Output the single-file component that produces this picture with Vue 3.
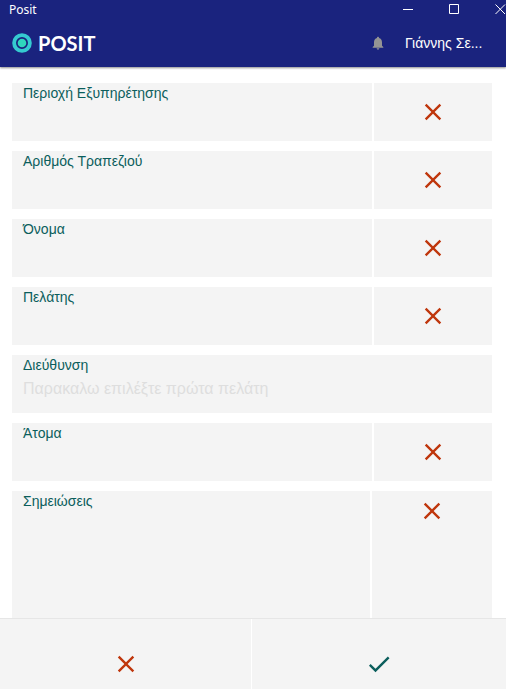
<script setup>
import { reactive } from 'vue'

const fields = reactive([
  { id: 'area', label: 'Περιοχή Εξυπηρέτησης', value: '', clearable: true },
  { id: 'table', label: 'Αριθμός Τραπεζιού', value: '', clearable: true },
  { id: 'name', label: 'Όνομα', value: '', clearable: true },
  { id: 'customer', label: 'Πελάτης', value: '', clearable: true },
  { id: 'address', label: 'Διεύθυνση', value: '', placeholder: 'Παρακαλω επιλέξτε πρώτα πελάτη', clearable: false },
  { id: 'people', label: 'Άτομα', value: '', clearable: true },
  { id: 'notes', label: 'Σημειώσεις', value: '', clearable: true, multiline: true }
])
</script>

<template>
  <div class="window">
    <header class="top">
      <div class="titlebar">
        <span class="title">Posit</span>
        <div class="controls">
          <button type="button" aria-label="Minimize">
            <svg width="11" height="11" viewBox="0 0 11 11"><path d="M0 5.5h10" /></svg>
          </button>
          <button type="button" aria-label="Maximize">
            <svg width="11" height="11" viewBox="0 0 11 11"><path d="M.5.5h9v9h-9z" /></svg>
          </button>
          <button type="button" aria-label="Close">
            <svg width="11" height="11" viewBox="0 0 11 11"><path d="M.5.5l9.500 9.500M10 .5L.5 10" /></svg>
          </button>
        </div>
      </div>
      <div class="appbar">
        <a class="brand" href="#">
          <svg width="20" height="20" viewBox="0 0 20 20">
            <circle cx="10" cy="10" r="7.900" fill="none" stroke="#35cad0" stroke-width="3.800" />
            <circle cx="10" cy="10" r="4.300" fill="#2fd6bd" />
          </svg>
          <span>POSIT</span>
        </a>
        <button type="button" class="bell" aria-label="Notifications">
          <svg width="16" height="16" viewBox="0 0 24 24">
            <path d="M12 22c1.100 0 2-.9 2-2h-4c0 1.100.89 2 2 2zm6-6v-5c0-3.070-1.640-5.640-4.500-6.320V4c0-.83-.67-1.500-1.500-1.500s-1.500.67-1.500 1.500v.68C7.630 5.360 6 7.920 6 11v5l-2 2v1h16v-1l-2-2z" />
          </svg>
        </button>
        <button type="button" class="user">Γιάννης Σε...</button>
      </div>
    </header>

    <form class="form" @submit.prevent>
      <div v-for="f in fields" :key="f.id" class="row" :class="{ notes: f.multiline }">
        <div class="field">
          <label :for="f.id">{{ f.label }}</label>
          <textarea v-if="f.multiline" :id="f.id" v-model="f.value"></textarea>
          <input v-else :id="f.id" v-model="f.value" type="text" :placeholder="f.placeholder" />
        </div>
        <button v-if="f.clearable" type="button" class="clear" :aria-label="'Καθαρισμός: ' + f.label" @click="f.value = ''">
          <svg class="cross" width="28" height="28" viewBox="0 0 24 24">
            <path d="M19 6.410L17.590 5 12 10.590 6.410 5 5 6.410 10.590 12 5 17.590 6.410 19 12 13.410 17.590 19 19 17.590 13.410 12z" />
          </svg>
        </button>
      </div>
    </form>

    <footer class="actions">
      <button type="button" aria-label="Ακύρωση">
        <svg class="cross" width="28" height="28" viewBox="0 0 24 24">
          <path d="M19 6.410L17.590 5 12 10.590 6.410 5 5 6.410 10.590 12 5 17.590 6.410 19 12 13.410 17.590 19 19 17.590 13.410 12z" />
        </svg>
      </button>
      <button type="button" aria-label="Αποδοχή">
        <svg class="check" width="28" height="28" viewBox="0 0 24 24">
          <path d="M9 16.170L4.830 12l-1.420 1.410L9 19 21 7l-1.410-1.410z" />
        </svg>
      </button>
    </footer>
  </div>
</template>

<style>
body {
  margin: 0;
  background: #fff;
}
</style>

<style scoped>
.window {
  display: flex;
  flex-direction: column;
  min-height: 100vh;
  font-family: "Liberation Sans", Arial, sans-serif;
  font-size: 14px;
}
button {
  display: flex;
  align-items: center;
  justify-content: center;
  margin: 0;
  padding: 0;
  border: 0;
  background: none;
  font: inherit;
  cursor: pointer;
}
svg {
  display: block;
  flex: none;
}
.top {
  background: #1a237e;
  color: #fff;
  box-shadow: 0 1px 2px rgba(0, 0, 0, 0.45);
}
.titlebar {
  display: flex;
  align-items: center;
  justify-content: space-between;
  height: 19px;
  padding-left: 9px;
  overflow: hidden;
}
.title {
  font: 12px/18px "Noto Sans", "Open Sans", sans-serif;
}
.controls {
  display: flex;
  margin-right: -17px;
}
.controls button {
  width: 46px;
  height: 19px;
}
.controls path {
  fill: none;
  stroke: #fff;
  stroke-width: 1;
}
.appbar {
  display: flex;
  align-items: center;
  height: 48px;
  padding: 0 20px 0 12px;
}
.brand {
  display: flex;
  align-items: center;
  gap: 6px;
  margin-right: auto;
  color: #fff;
  font: 700 20px/24px Lato, sans-serif;
  text-decoration: none;
}
.bell {
  margin-right: 19px;
}
.bell path {
  fill: #949494;
}
.user {
  min-width: 81px;
  justify-content: flex-start;
  color: #fff;
  line-height: 20px;
  white-space: nowrap;
}
.form {
  display: flex;
  flex: 1;
  flex-direction: column;
  gap: 10px;
  padding: 16px 14px 0 12px;
}
.row {
  display: flex;
  gap: 2px;
  height: 58px;
}
.row.notes {
  flex: 1;
  height: auto;
  min-height: 100px;
}
.field {
  display: flex;
  flex: 1;
  flex-direction: column;
  min-width: 0;
  padding: 0 11px;
  background: #f4f4f4;
}
label {
  color: #0b5e5c;
  line-height: 20px;
}
input,
textarea {
  width: 100%;
  height: 28px;
  margin: 0;
  padding: 0;
  border: 0;
  outline: 0;
  background: transparent;
  color: #333;
  font: 16px/28px "Liberation Sans", Arial, sans-serif;
  resize: none;
}
textarea {
  flex: 1;
  box-sizing: border-box;
}
input::placeholder {
  color: #dedede;
  opacity: 1;
}
.clear {
  width: 118px;
  background: #f4f4f4;
}
.notes .clear {
  align-items: flex-start;
  width: 120px;
  padding-top: 6px;
}
.cross {
  fill: #bf360c;
}
.check {
  fill: #0b5e5c;
}
.actions {
  display: grid;
  grid-template-columns: 251fr 254fr;
  gap: 1px;
  border-top: 1px solid #e6e6e6;
  background: #fff;
}
.actions button {
  height: 70px;
  padding-top: 20px;
  background: #f4f4f4;
}
</style>
